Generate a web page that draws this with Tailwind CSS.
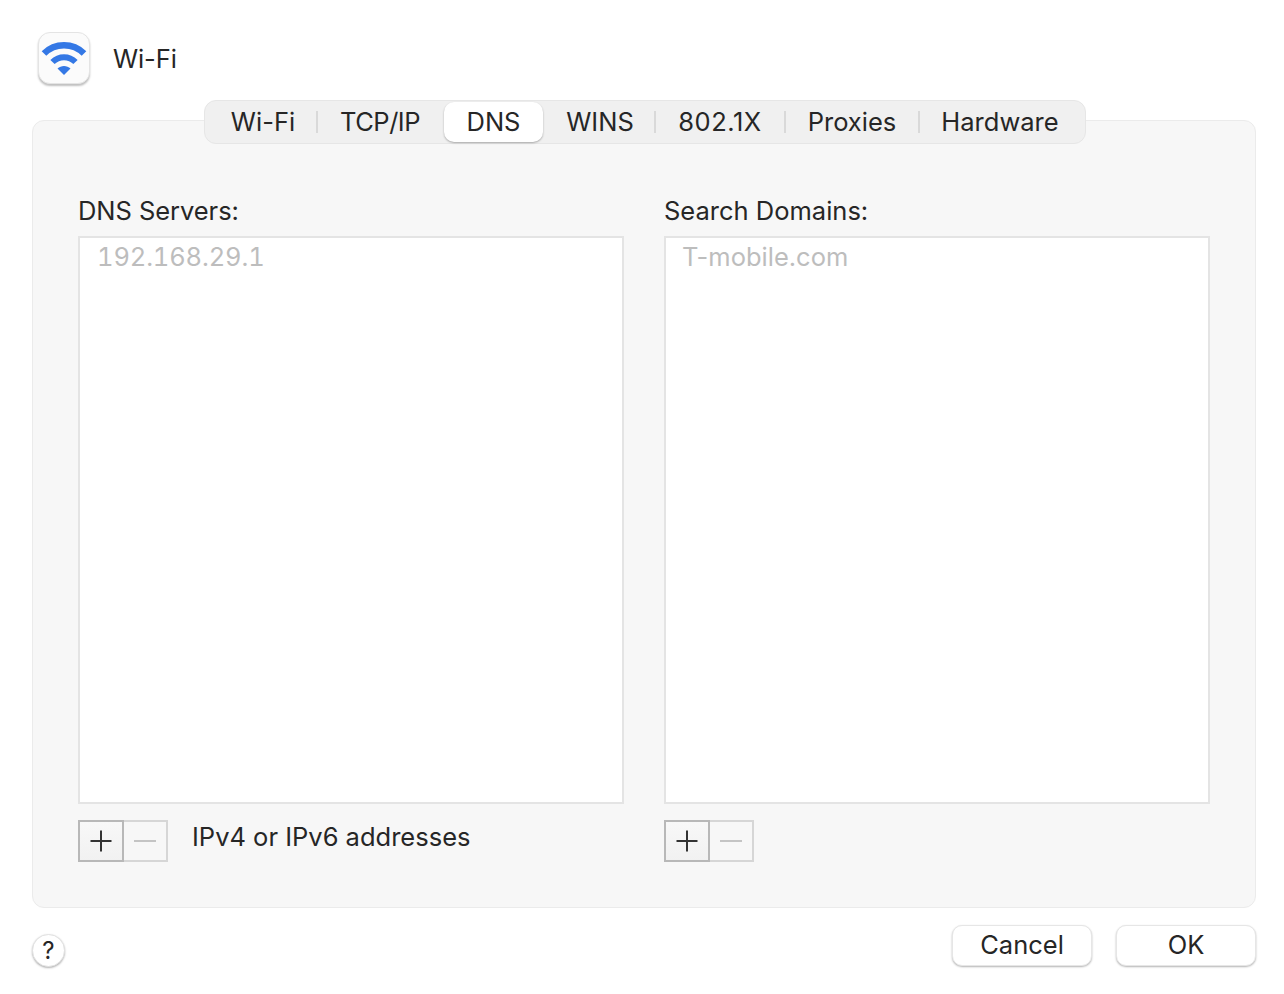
<!DOCTYPE html>
<html>
<head>
<meta charset="utf-8">
<script src="https://cdn.jsdelivr.net/npm/@tailwindcss/browser@4"></script>
</head>
<body class="bg-white">
<div class="w-[1284px] h-[994px] overflow-hidden bg-white font-['Inter','Liberation_Sans',sans-serif] text-[25.5px] leading-[32px] text-[#262626] antialiased">
  <header class="flex items-center h-[100px] pl-[38px] pt-[16px]">
    <div class="w-[52px] h-[52px] rounded-[12px] bg-[#fbfbfb] border border-[#e4e4e4] shadow-[0_2px_2px_rgba(0,0,0,0.25)] flex items-center justify-center">
      <svg width="46" height="38" viewBox="0 0 46 38" class="-mt-[1px]">
        <path d="M3 14.5C14 3.5 32 3.5 43 14.5" fill="none" stroke="#3478e5" stroke-width="6.5"/>
        <path d="M11.5 23C18 16.5 28 16.5 34.5 23" fill="none" stroke="#3478e5" stroke-width="6"/>
        <path d="M16.5 29.5C20 26 26 26 29.5 29.5L23 36Z" fill="#3478e5"/>
      </svg>
    </div>
    <span class="ml-[23px] mt-px tracking-[-0.1px]">Wi-Fi</span>
  </header>
  <main class="relative mx-[32px] mt-[20px] w-[1224px] h-[788px] rounded-[12px] bg-[#f7f7f7] border border-[#ebebeb]">
    <nav class="absolute left-[171px] -top-[21px] w-[882px] h-[44px] flex items-center pl-[4px] rounded-[12px] bg-[#f0f0f0] border border-[#e6e6e6]">
      <span class="w-[108px] h-full pb-px flex items-center justify-center relative">Wi-Fi<i class="absolute -right-px top-[10px] h-[22px] w-[2px] bg-[#d9d9d9]"></i></span>
      <span class="w-[126px] h-full pb-px flex items-center justify-center tracking-[-0.5px]">TCP/IP</span>
      <span class="ml-px w-[99px] h-[40px] pb-px flex items-center justify-center rounded-[10px] bg-white shadow-[0_1px_2px_rgba(0,0,0,0.3)]">DNS</span>
      <span class="ml-[2px] w-[110px] h-full pb-px flex items-center justify-center relative">WINS<i class="absolute -right-px top-[10px] h-[22px] w-[2px] bg-[#d9d9d9]"></i></span>
      <span class="w-[130px] h-full pb-px flex items-center justify-center relative tracking-[0.5px]">802.1X<i class="absolute -right-px top-[10px] h-[22px] w-[2px] bg-[#d9d9d9]"></i></span>
      <span class="w-[134px] h-full pb-px flex items-center justify-center relative">Proxies<i class="absolute -right-px top-[10px] h-[22px] w-[2px] bg-[#d9d9d9]"></i></span>
      <span class="w-[162px] h-full pb-px flex items-center justify-center">Hardware</span>
    </nav>
    <div class="flex gap-[40px] pl-[45px] pt-[74px]">
      <section class="w-[546px]">
        <h2 class="font-normal h-[41px] tracking-[-0.05px]">DNS Servers:</h2>
        <div class="h-[568px] bg-white border-2 border-[#e4e4e4] pl-[17px] pt-[3px] text-[#bdbdbd] tabular-nums tracking-[-0.15px]">192.168.29.1</div>
        <div class="flex items-start mt-[16px]">
          <div class="flex h-[42px]">
            <button class="w-[46px] h-full border-2 border-[#b8b8b8] bg-gradient-to-b from-[#f8f8f8] to-[#f1f1f1] flex items-center justify-center">
              <svg width="24" height="24" viewBox="0 0 24 24"><path d="M12 1.5V22.5M1.5 12H22.5" stroke="#333" stroke-width="2"/></svg>
            </button>
            <button class="w-[44px] h-full border-2 border-l-0 border-[#d6d6d6] flex items-center justify-center">
              <svg width="24" height="24" viewBox="0 0 24 24"><path d="M1 12H23" stroke="#c4c4c4" stroke-width="2"/></svg>
            </button>
          </div>
          <p class="ml-[24px] mt-px">IPv4 or IPv6 addresses</p>
        </div>
      </section>
      <section class="w-[546px]">
        <h2 class="font-normal h-[41px]">Search Domains:</h2>
        <div class="h-[568px] bg-white border-2 border-[#e4e4e4] pl-[16px] pt-[3px] text-[#bdbdbd]">T-mobile.com</div>
        <div class="flex mt-[16px] h-[42px]">
          <button class="w-[46px] h-full border-2 border-[#b8b8b8] bg-gradient-to-b from-[#f8f8f8] to-[#f1f1f1] flex items-center justify-center">
            <svg width="24" height="24" viewBox="0 0 24 24"><path d="M12 1.5V22.5M1.5 12H22.5" stroke="#333" stroke-width="2"/></svg>
          </button>
          <button class="w-[44px] h-full border-2 border-l-0 border-[#d6d6d6] flex items-center justify-center">
            <svg width="24" height="24" viewBox="0 0 24 24"><path d="M1 12H23" stroke="#c4c4c4" stroke-width="2"/></svg>
          </button>
        </div>
      </section>
    </div>
  </main>
  <footer class="flex items-start justify-between mx-[32px] w-[1225px] mt-[17px]">
    <button class="mt-[9px] w-[33px] h-[33px] rounded-full bg-white border border-[#e2e2e2] shadow-[0_1px_2px_rgba(0,0,0,0.3)] flex items-center justify-center text-[24px]">?</button>
    <div class="flex gap-[24px] pr-px">
      <button class="w-[140px] h-[41px] pb-[2px] rounded-[10px] bg-white border border-[#e6e6e6] shadow-[0_1px_2px_rgba(0,0,0,0.3)]">Cancel</button>
      <button class="w-[140px] h-[41px] pb-[2px] rounded-[10px] bg-white border border-[#e6e6e6] shadow-[0_1px_2px_rgba(0,0,0,0.3)]">OK</button>
    </div>
  </footer>
</div>
</body>
</html>
